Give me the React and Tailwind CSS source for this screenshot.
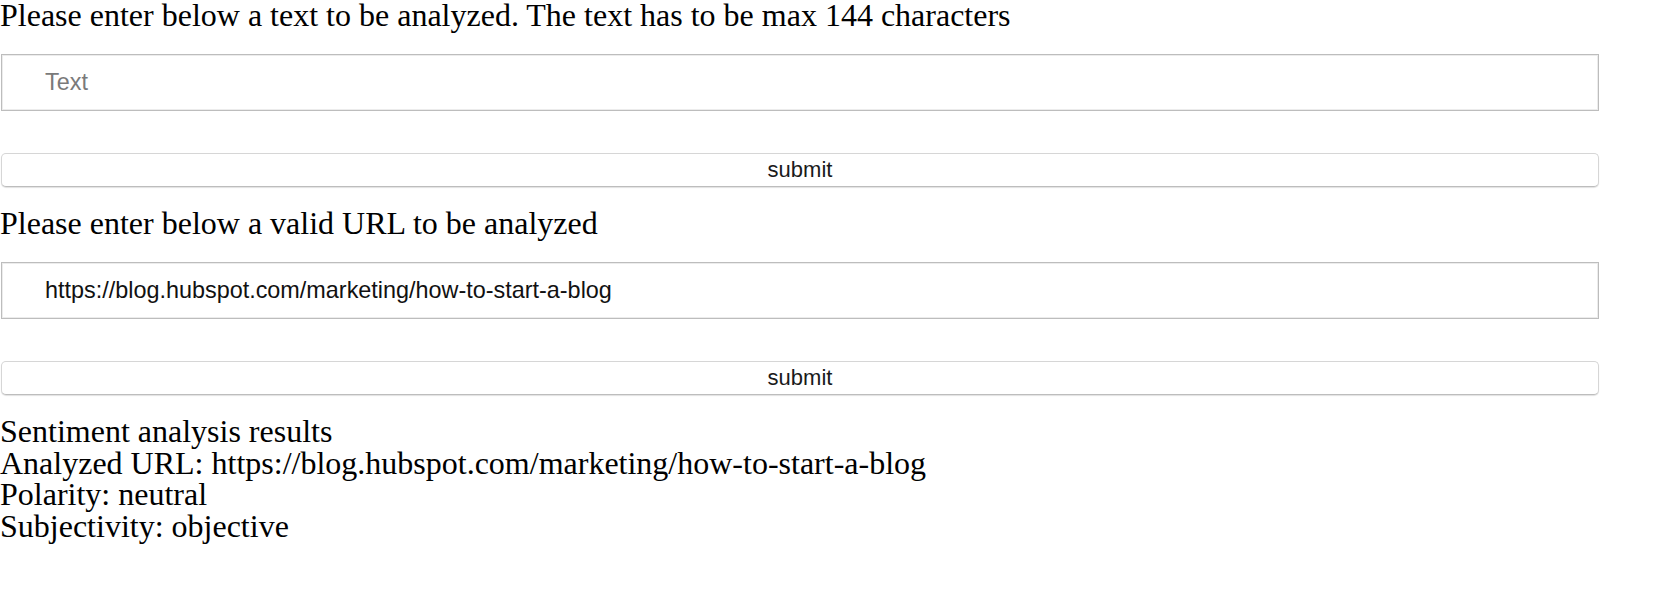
import React from "react";

const serif = { fontFamily: '"Liberation Serif", "Times New Roman", serif' };

function Section({ label, value, placeholder }) {
  return (
    <div className="flex flex-col">
      <p className="text-[32px] leading-[31px] text-black" style={serif}>{label}</p>
      <input
        type="text"
        readOnly
        defaultValue={value}
        placeholder={placeholder}
        className="mt-[23px] ml-px h-[57px] w-[1598px] border border-[#bdbdbd] shadow-[inset_0_0_0_1px_#ececec] bg-white pl-[43px] text-[23.4px] text-[#111] placeholder:text-[#7a7a7a] outline-none font-['Liberation_Sans',Arial,sans-serif]"
      />
      <button
        type="button"
        className="mt-[42px] ml-px h-[34px] w-[1598px] rounded-[5px] border border-[#d6d6d6] border-b-[#bdbdbd] bg-white shadow-[0_1px_1px_rgba(0,0,0,0.12)] text-[22px] leading-none text-[#1a1a1a] font-['Liberation_Sans',Arial,sans-serif]"
      >
        submit
      </button>
    </div>
  );
}

export default function App() {
  return (
    <div className="bg-white min-h-[597px] w-[1659px] overflow-hidden">
      <Section
        label="Please enter below a text to be analyzed. The text has to be max 144 characters"
        placeholder="Text"
      />
      <div className="mt-[21px]">
        <Section
          label="Please enter below a valid URL to be analyzed"
          value="https://blog.hubspot.com/marketing/how-to-start-a-blog"
        />
      </div>
      <div className="mt-[21px] text-[32px] leading-[31.5px] text-black" style={serif}>
        <p>Sentiment analysis results</p>
        <p>Analyzed URL: https://blog.hubspot.com/marketing/how-to-start-a-blog</p>
        <p>Polarity: neutral</p>
        <p>Subjectivity: objective</p>
      </div>
    </div>
  );
}
